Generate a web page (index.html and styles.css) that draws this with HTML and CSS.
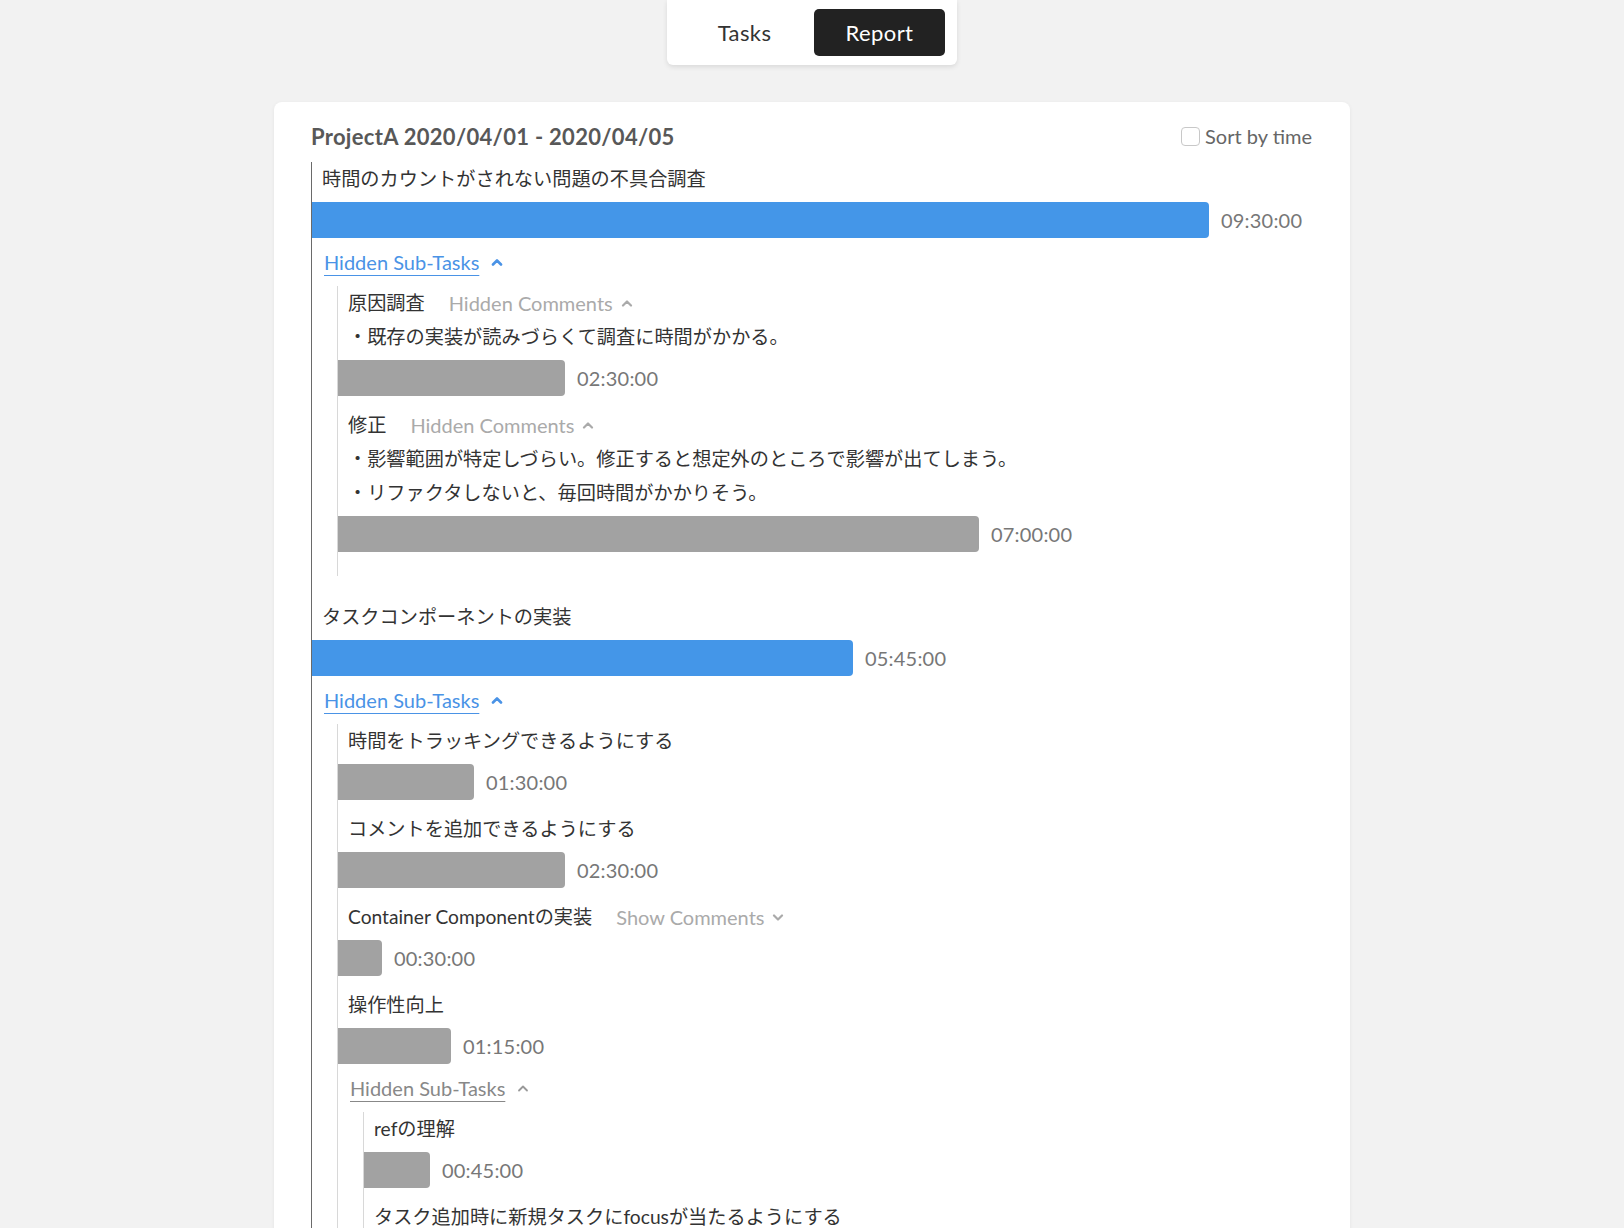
FILE: index.html
```html
<!DOCTYPE html>
<html lang="ja">
<head>
<meta charset="utf-8">
<title>Report</title>
<link rel="stylesheet" href="styles.css">
</head>
<body>
<div class="page">
  <nav class="tabs">
    <button class="tab">Tasks</button>
    <button class="tab active">Report</button>
  </nav>

  <section class="card">
    <header class="card-head">
      <h1 class="card-title">ProjectA 2020/04/01 - 2020/04/05</h1>
      <label class="sort"><span class="checkbox"></span>Sort by time</label>
    </header>

    <div class="tree">
      <div class="task">
        <div class="row title">時間のカウントがされない問題の不具合調査</div>
        <div class="bar-row"><div class="bar blue" style="width:897px"></div><span class="time">09:30:00</span></div>
        <div class="row toggle link-blue"><span class="u">Hidden Sub-Tasks</span><svg class="chev bold" viewBox="0 0 12 8"><polyline points="2,6.5 6,2.5 10,6.5"/></svg></div>
        <div class="subs">
          <div class="sub">
            <div class="row title">原因調査<span class="comments-toggle">Hidden Comments<svg class="chev" viewBox="0 0 12 8"><polyline points="2,6.5 6,2.5 10,6.5"/></svg></span></div>
            <div class="row comment">・既存の実装が読みづらくて調査に時間がかかる。</div>
            <div class="bar-row"><div class="bar gray" style="width:227px"></div><span class="time">02:30:00</span></div>
          </div>
          <div class="sub">
            <div class="row title">修正<span class="comments-toggle">Hidden Comments<svg class="chev" viewBox="0 0 12 8"><polyline points="2,6.5 6,2.5 10,6.5"/></svg></span></div>
            <div class="row comment">・影響範囲が特定しづらい。修正すると想定外のところで影響が出てしまう。</div>
            <div class="row comment">・リファクタしないと、毎回時間がかかりそう。</div>
            <div class="bar-row"><div class="bar gray" style="width:641px"></div><span class="time">07:00:00</span></div>
          </div>
        </div>
      </div>

      <div class="task">
        <div class="row title">タスクコンポーネントの実装</div>
        <div class="bar-row"><div class="bar blue" style="width:541px"></div><span class="time">05:45:00</span></div>
        <div class="row toggle link-blue"><span class="u">Hidden Sub-Tasks</span><svg class="chev bold" viewBox="0 0 12 8"><polyline points="2,6.5 6,2.5 10,6.5"/></svg></div>
        <div class="subs">
          <div class="sub">
            <div class="row title">時間をトラッキングできるようにする</div>
            <div class="bar-row"><div class="bar gray" style="width:136px"></div><span class="time">01:30:00</span></div>
          </div>
          <div class="sub">
            <div class="row title">コメントを追加できるようにする</div>
            <div class="bar-row"><div class="bar gray" style="width:227px"></div><span class="time">02:30:00</span></div>
          </div>
          <div class="sub">
            <div class="row title">Container Componentの実装<span class="comments-toggle">Show Comments<svg class="chev" viewBox="0 0 12 8"><polyline points="2,2.5 6,6.5 10,2.5"/></svg></span></div>
            <div class="bar-row"><div class="bar gray" style="width:44px"></div><span class="time">00:30:00</span></div>
          </div>
          <div class="sub">
            <div class="row title">操作性向上</div>
            <div class="bar-row"><div class="bar gray" style="width:113px"></div><span class="time">01:15:00</span></div>
            <div class="row toggle link-gray"><span class="u">Hidden Sub-Tasks</span><svg class="chev" viewBox="0 0 12 8"><polyline points="2,6.5 6,2.5 10,6.5"/></svg></div>
            <div class="subs">
              <div class="sub">
                <div class="row title">refの理解</div>
                <div class="bar-row"><div class="bar gray" style="width:66px"></div><span class="time">00:45:00</span></div>
              </div>
              <div class="sub">
                <div class="row title">タスク追加時に新規タスクにfocusが当たるようにする</div>
                <div class="bar-row"><div class="bar gray" style="width:90px"></div><span class="time">01:00:00</span></div>
              </div>
            </div>
          </div>
        </div>
      </div>
    </div>
  </section>
</div>
</body>
</html>
```

FILE: styles.css
```css
* { box-sizing: border-box; }

html, body {
  margin: 0;
  padding: 0;
  background: #f2f2f2;
  font-family: "Lato", "Noto Sans CJK JP", sans-serif;
  color: #333;
}

.page {
  display: flex;
  flex-direction: column;
  align-items: center;
  height: 1228px;
  overflow: hidden;
}

.tabs {
  display: flex;
  gap: 4px;
  padding: 9px 12px;
  background: #fff;
  border-radius: 0 0 6px 6px;
  box-shadow: 0 2px 5px rgba(0, 0, 0, 0.10);
}

.tab {
  width: 131px;
  height: 47px;
  border: none;
  border-radius: 5px;
  background: transparent;
  font-family: "Lato", sans-serif;
  font-size: 22px;
  letter-spacing: 0.4px;
  color: #333;
  padding: 0;
}

.tab.active {
  background: #222;
  color: #fff;
}

.card {
  margin-top: 37px;
  width: 1076px;
  flex: 1;
  background: #fff;
  border-radius: 8px 8px 0 0;
  box-shadow: 0 1px 4px rgba(0, 0, 0, 0.06);
  padding: 20px 38px 0 37px;
}

.card-head {
  display: flex;
  justify-content: space-between;
  align-items: center;
  height: 28px;
}

.card-title {
  margin: 0;
  font-size: 22px;
  font-weight: 700;
  color: #585858;
  letter-spacing: 0.3px;
}

.sort {
  display: flex;
  align-items: center;
  gap: 5px;
  font-size: 20px;
  color: #666;
}

.checkbox {
  width: 19px;
  height: 19px;
  border: 1.5px solid #c8c8c8;
  border-radius: 4px;
  background: #fff;
}

.tree {
  margin-top: 12px;
  border-left: 1px solid #6a6a6a;
}

.task {
  padding-bottom: 24px;
}

.row {
  line-height: 34px;
  height: 34px;
  font-size: 19.2px;
  white-space: nowrap;
}

.title, .comment {
  padding-left: 10px;
  color: #333;
}

.title {
  display: flex;
  align-items: center;
}

.bar-row {
  display: flex;
  align-items: center;
  margin-top: 6px;
  height: 36px;
}

.bar {
  height: 36px;
  border-radius: 0 4px 4px 0;
  flex: none;
}

.bar.blue { background: #4496e8; }
.bar.gray { background: #a2a2a2; }

.time {
  margin-left: 12px;
  font-size: 20px;
  letter-spacing: 0.2px;
  color: #777;
}

.toggle {
  display: flex;
  align-items: center;
  margin-top: 7px;
  margin-left: 12px;
  font-size: 20px;
}

.u {
  text-decoration: underline;
  text-underline-offset: 5px;
  text-decoration-thickness: 1px;
}

.link-blue { color: #4a93e6; }
.link-gray { color: #888; }

.chev {
  width: 12px;
  height: 8px;
  margin-left: 12px;
  fill: none;
  stroke: currentColor;
  stroke-width: 1.5;
  stroke-linecap: round;
  stroke-linejoin: round;
}

.chev.bold { stroke-width: 2.6; }

.link-gray .chev { color: #999; stroke-width: 1.8; }

.comments-toggle {
  display: inline-flex;
  align-items: center;
  margin-left: 24px;
  font-size: 20px;
  color: #aaa;
}

.comments-toggle .chev {
  margin-left: 8px;
  stroke-width: 2.2;
}

.subs {
  margin-top: 7px;
  margin-left: 25px;
  border-left: 1px solid #d8d8d8;
  padding-bottom: 12px;
}

.sub {
  margin-bottom: 12px;
}
```
